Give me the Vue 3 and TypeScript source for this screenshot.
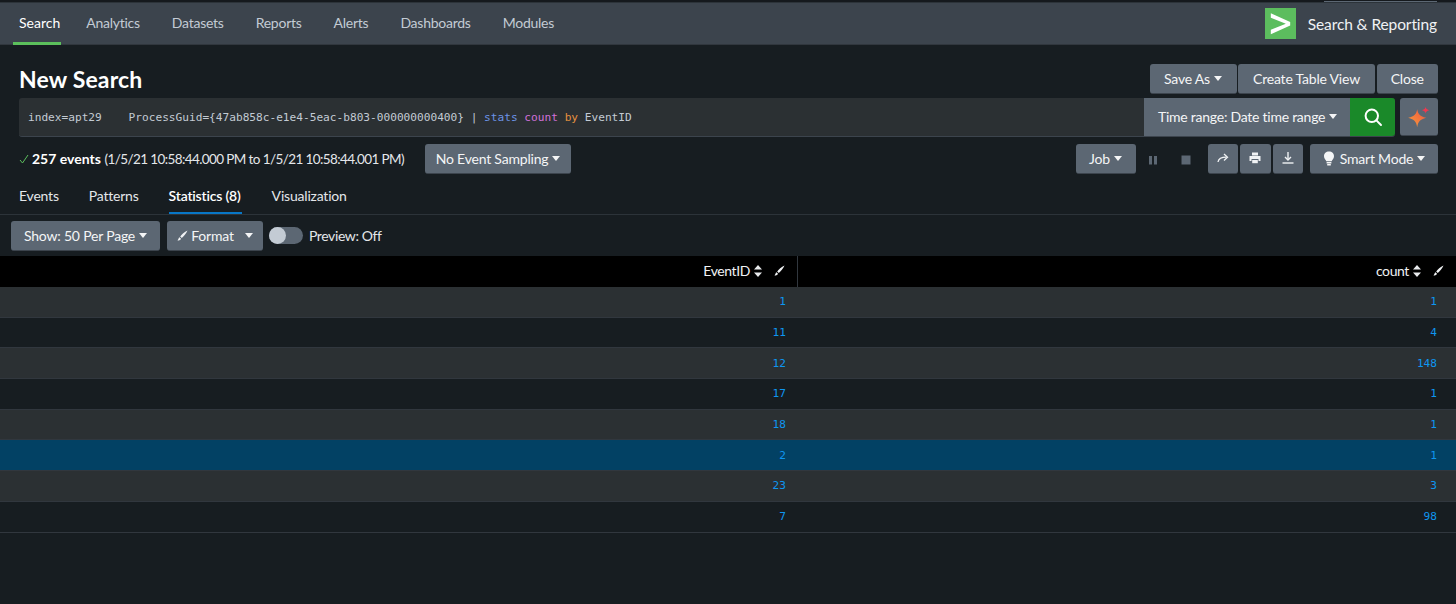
<script setup lang="ts">
const navItems = ['Search', 'Analytics', 'Datasets', 'Reports', 'Alerts', 'Dashboards', 'Modules']
const tabs = ['Events', 'Patterns', 'Statistics (8)', 'Visualization']
const rows = [
  { id: '1', count: '1' },
  { id: '11', count: '4' },
  { id: '12', count: '148' },
  { id: '17', count: '1' },
  { id: '18', count: '1' },
  { id: '2', count: '1', hover: true },
  { id: '23', count: '3' },
  { id: '7', count: '98' }
]
</script>

<template>
  <div class="page">
    <div class="topstrip"><div class="stripbox"></div></div>
    <nav class="nav">
      <a v-for="(item, i) in navItems" :key="item" class="nav-item" :class="{ active: i === 0 }">{{ item }}</a>
      <div class="app-name">
        <svg class="logo" width="31" height="31" viewBox="0 0 32 32">
          <rect width="32" height="32" fill="#5cbd5e" />
          <path d="M6 5.5 L26 14.5 V18 L6 27 V22.5 L21.5 16.2 L6 10 Z" fill="#fff" />
        </svg>
        <span>Search &amp; Reporting</span>
      </div>
    </nav>

    <div class="title-row">
      <h1>New Search</h1>
      <div class="btn-group">
        <button class="btn save">Save As <i class="caret"></i></button>
        <button class="btn create">Create Table View</button>
        <button class="btn close">Close</button>
      </div>
    </div>

    <div class="search-row">
      <div class="search-bar">
        <div class="query">index=apt29&nbsp;&nbsp;&nbsp;&nbsp;ProcessGuid={47ab858c-e1e4-5eac-b803-000000000400} | <span class="q-blue">stats</span> <span class="q-pink">count</span> <span class="q-orange">by</span> EventID</div>
        <div class="time-range">Time range: Date time range <i class="caret"></i></div>
        <button class="go">
          <svg width="20" height="20" viewBox="0 0 20 20" fill="none" stroke="#fff" stroke-width="2">
            <circle cx="8.8" cy="8.8" r="6.2" />
            <path d="M13.4 13.4 L18 18" stroke-linecap="round" />
          </svg>
        </button>
      </div>
      <button class="btn spark">
        <svg width="24" height="24" viewBox="0 0 20 20">
          <defs>
            <linearGradient id="sparkfill" x1="0" y1="1" x2="1" y2="0">
              <stop offset="0" stop-color="#f5a13b" />
              <stop offset="1" stop-color="#f0503f" />
            </linearGradient>
          </defs>
          <path d="M8.5 3.5 C9.3 7.6 10.7 9.2 16 10.7 C10.7 12.2 9.3 13.8 8.5 18.5 C7.7 13.8 6.3 12.2 1 10.7 C6.3 9.2 7.7 7.6 8.5 3.5 Z" fill="url(#sparkfill)" />
          <path d="M15.5 1.5 C15.8 3.2 16.4 3.8 18.5 4.3 C16.4 4.8 15.8 5.4 15.5 7.2 C15.2 5.4 14.6 4.8 12.5 4.3 C14.6 3.8 15.2 3.2 15.5 1.5 Z" fill="#f0384f" />
        </svg>
      </button>
    </div>

    <div class="status-row">
      <svg class="check" width="10" height="10" viewBox="0 0 10 10" fill="none" stroke="#5cbd5e" stroke-width="1">
        <path d="M1 6 L3.5 9 L9 1" />
      </svg>
      <span class="status"><b>257 events</b> <span class="range">(1/5/21 10:58:44.000 PM to 1/5/21 10:58:44.001 PM)</span></span>
      <button class="btn sampling">No Event Sampling <i class="caret"></i></button>
      <div class="job-tools">
        <button class="btn job">Job <i class="caret"></i></button>
        <div class="ctrl">
          <svg width="10" height="10" viewBox="0 0 10 10" fill="#5c6773"><rect x="1" y="1" width="3" height="8.5" /><rect x="6" y="1" width="3" height="8.5" /></svg>
        </div>
        <div class="ctrl">
          <svg width="10" height="10" viewBox="0 0 10 10" fill="#5c6773"><rect x="0.5" y="0.5" width="9" height="9" /></svg>
        </div>
        <button class="btn icon-btn">
          <svg width="12" height="12" viewBox="0 0 12 12" fill="none" stroke="#f0f2f4" stroke-width="1.3">
            <path d="M1 10 C1.5 6.5 4 5.2 9.5 5.2" />
            <path d="M7 2 L10.5 5.2 L7 8.4" />
          </svg>
        </button>
        <button class="btn icon-btn">
          <svg width="12" height="12" viewBox="0 0 12 12" fill="#f0f2f4">
            <rect x="3" y="0.5" width="6" height="3" />
            <path d="M0.5 4 H11.5 V9 H9.5 V7 H2.5 V9 H0.5 Z" />
            <rect x="3.2" y="8" width="5.6" height="3.2" />
          </svg>
        </button>
        <button class="btn icon-btn">
          <svg width="14" height="14" viewBox="0 0 14 14" fill="none" stroke="#f0f2f4" stroke-width="1.4">
            <path d="M7 1 V8.5" />
            <path d="M4 6 L7 9 L10 6" />
            <path d="M1.5 12 H12.5" />
          </svg>
        </button>
        <button class="btn smart">
          <svg width="12" height="15" viewBox="0 0 12 15" fill="#f4f5f6">
            <path d="M6 0.5 C9 0.5 11 2.6 11 5.2 C11 7.4 9.4 8.4 8.7 10.2 H3.3 C2.6 8.4 1 7.4 1 5.2 C1 2.6 3 0.5 6 0.5 Z" />
            <rect x="3.6" y="11" width="4.8" height="1.5" />
            <rect x="4.2" y="13" width="3.6" height="1.5" />
          </svg>
          Smart Mode <i class="caret"></i>
        </button>
      </div>
    </div>

    <div class="tabs">
      <a v-for="(tab, i) in tabs" :key="tab" class="tab" :class="{ active: i === 2 }">{{ tab }}</a>
    </div>

    <div class="toolbar">
      <button class="btn show">Show: 50 Per Page <i class="caret"></i></button>
      <button class="btn format">
        <svg class="brush" width="11" height="11" viewBox="0 0 11 11" fill="#f0f2f4"><path d="M10.5 0.5 C7.5 2 4.5 4.5 3.2 6.5 L4.8 8 C6.8 6.5 9.2 3.5 10.5 0.5 Z M2.5 7.3 C1.5 7.8 1.5 9.5 0.5 10.5 C2.5 10.5 3.8 9.8 4 8.7 Z" /></svg>
        Format <i class="caret wide"></i>
      </button>
      <span class="switch"><span class="knob"></span></span>
      <span class="preview">Preview: Off</span>
    </div>

    <div class="table">
      <div class="thead">
        <div class="th first">
          EventID
          <svg class="sort" width="8" height="12" viewBox="0 0 8 12" fill="#e8eaec"><path d="M4 0 L8 4.6 H0 Z M4 12 L0 7.4 H8 Z" /></svg>
          <svg class="brush-h" width="11" height="11" viewBox="0 0 11 11" fill="#f0f2f4"><path d="M10.5 0.5 C7.5 2 4.5 4.5 3.2 6.5 L4.8 8 C6.8 6.5 9.2 3.5 10.5 0.5 Z M2.5 7.3 C1.5 7.8 1.5 9.5 0.5 10.5 C2.5 10.5 3.8 9.8 4 8.7 Z" /></svg>
        </div>
        <div class="th">
          count
          <svg class="sort" width="8" height="12" viewBox="0 0 8 12" fill="#e8eaec"><path d="M4 0 L8 4.6 H0 Z M4 12 L0 7.4 H8 Z" /></svg>
          <svg class="brush-h" width="11" height="11" viewBox="0 0 11 11" fill="#f0f2f4"><path d="M10.5 0.5 C7.5 2 4.5 4.5 3.2 6.5 L4.8 8 C6.8 6.5 9.2 3.5 10.5 0.5 Z M2.5 7.3 C1.5 7.8 1.5 9.5 0.5 10.5 C2.5 10.5 3.8 9.8 4 8.7 Z" /></svg>
        </div>
      </div>
      <div
        v-for="(row, i) in rows"
        :key="row.id"
        class="tr"
        :class="{ odd: i % 2 === 0, hover: row.hover }"
      >
        <div class="td first">{{ row.id }}</div>
        <div class="td">{{ row.count }}</div>
      </div>
    </div>
  </div>
</template>

<style>
html,
body {
  margin: 0;
  background: #171d21;
}
</style>

<style scoped>
.page {
  width: 1456px;
  height: 604px;
  overflow: hidden;
  background: #171d21;
  color: #fff;
  font-family: Lato, 'Open Sans', sans-serif;
  font-size: 14px;
}
.topstrip {
  height: 2px;
  background: #15191d;
  display: flex;
  justify-content: flex-end;
  padding-right: 19px;
  border-bottom: 1px solid #2c3339;
}
.stripbox {
  width: 113px;
  height: 1px;
  border-bottom: 1px solid #5c6773;
}
.nav {
  height: 42px;
  background: #3c444d;
  display: flex;
  padding-left: 13px;
  gap: 20px;
  box-sizing: border-box;
  border-bottom: 1px solid #31373e;
}
.nav-item {
  padding: 0 6px;
  line-height: 40px;
  font-size: 14px;
  letter-spacing: -0.25px;
  color: #c3cbd4;
}
.nav-item.active {
  color: #fff;
  box-shadow: inset 0 -3px 0 #5cc05c;
  height: 42px;
  padding: 0 1px 0 6px;
  letter-spacing: 0;
  margin-right: -1px;
}
.app-name {
  margin-left: auto;
  display: flex;
  align-items: center;
  gap: 12px;
  padding-right: 19px;
  font-size: 15.5px;
  letter-spacing: -0.1px;
  color: #f0f2f4;
}
.title-row {
  height: 53px;
  display: flex;
  align-items: flex-start;
  justify-content: space-between;
  padding: 19px 18px 0 19px;
  box-sizing: border-box;
}
h1 {
  margin: 0;
  font-size: 23px;
  line-height: 30px;
  font-weight: 700;
  letter-spacing: 0.15px;
  color: #fff;
}
.btn-group {
  display: flex;
  gap: 1.5px;
}
.btn {
  height: 30px;
  padding: 0 13px;
  border: none;
  border-bottom: 1px solid #3c444d;
  border-radius: 3px;
  background: #5c6773;
  color: #f4f5f6;
  font-family: inherit;
  font-size: 14px;
  letter-spacing: -0.2px;
  display: inline-flex;
  align-items: center;
  justify-content: center;
  white-space: nowrap;
  box-sizing: border-box;
}
.save {
  width: 87px;
}
.create {
  width: 137px;
}
.close {
  width: 61.5px;
}
.caret {
  display: inline-block;
  margin-left: 4px;
  border-left: 4px solid transparent;
  border-right: 4px solid transparent;
  border-top: 5px solid #f4f5f6;
}
.caret.wide {
  margin-left: 8px;
}
.search-row {
  display: flex;
  padding: 0 18px 0 19px;
  gap: 5px;
  height: 39px;
}
.search-bar {
  flex: 1;
  display: flex;
  background: #2b3033;
  border-bottom: 1px solid #3c444d;
  border-radius: 3px;
  box-sizing: border-box;
}
.query {
  flex: 1;
  padding-left: 9px;
  line-height: 40px;
  font-family: 'DejaVu Sans Mono', monospace;
  font-size: 11.15px;
  color: #c3cbd4;
  white-space: pre;
}
.q-blue {
  color: #6b93e6;
}
.q-pink {
  color: #d070d8;
}
.q-orange {
  color: #e6913f;
}
.time-range {
  width: 206px;
  background: #5c6773;
  font-size: 14px;
  letter-spacing: -0.25px;
  color: #f4f5f6;
  display: flex;
  align-items: center;
  padding: 0 0 2px 14px;
  box-sizing: border-box;
}
.go {
  width: 45px;
  border: none;
  padding: 0;
  background: #1a8929;
  border-radius: 0 3px 3px 0;
  display: flex;
  align-items: center;
  justify-content: center;
}
.spark {
  width: 38px;
  height: 38px;
  padding: 0;
}
.status-row {
  height: 36px;
  margin-top: 1px;
  display: flex;
  align-items: center;
  padding: 5px 18px 0 19px;
  box-sizing: border-box;
  font-size: 14px;
}
.check {
  flex: none;
  margin-right: 3px;
}
.status {
  color: #e4e7ea;
  white-space: nowrap;
}
.status b {
  color: #fff;
}
.range {
  font-size: 13.5px;
  letter-spacing: -0.6px;
}
.sampling {
  margin-left: 21px;
  width: 146px;
  padding: 0;
}
.job-tools {
  margin-left: auto;
  display: flex;
  align-items: center;
  gap: 2px;
}
.job {
  width: 60px;
  padding: 0;
}
.ctrl {
  width: 31px;
  display: flex;
  justify-content: center;
  padding-top: 2px;
}
.ctrl:nth-child(3) {
  margin-right: 4px;
}
.icon-btn {
  width: 30.5px;
  padding: 0;
}
.smart {
  width: 128px;
  padding: 0;
  margin-left: 5px;
  gap: 5px;
}
.smart .caret {
  margin-left: -1px;
}
.tabs {
  height: 41px;
  display: flex;
  gap: 30px;
  padding-left: 19px;
  border-bottom: 1px solid #2c3339;
  box-sizing: border-box;
}
.tab {
  line-height: 44px;
  font-size: 14px;
  letter-spacing: -0.2px;
  color: #e4e7ea;
  height: 40px;
}
.tab.active {
  color: #fff;
  font-weight: 600;
  box-shadow: inset 0 -2px 0 #0877c7;
  width: 73px;
  white-space: nowrap;
}
.toolbar {
  height: 41px;
  display: flex;
  align-items: center;
  padding-left: 11px;
  box-sizing: border-box;
}
.show {
  width: 149px;
  padding: 0;
}
.format {
  width: 96px;
  padding: 0;
  margin-left: 7px;
  gap: 3px;
}
.brush {
  margin-top: 1px;
}
.switch {
  width: 34px;
  height: 17px;
  margin-left: 6px;
  border-radius: 9px;
  background: #5c6773;
  position: relative;
}
.knob {
  position: absolute;
  left: 0;
  top: 0;
  width: 17px;
  height: 17px;
  border-radius: 50%;
  background: #c3cbd4;
}
.preview {
  margin-left: 6px;
  font-size: 14px;
  letter-spacing: -0.4px;
  color: #e4e7ea;
}
.thead {
  height: 31px;
  background: #000;
  display: grid;
  grid-template-columns: 798px 1fr;
  box-sizing: border-box;
}
.th {
  display: flex;
  align-items: center;
  justify-content: flex-end;
  padding: 0 12px 2px 0;
  font-size: 14px;
  letter-spacing: -0.4px;
  color: #f0f2f4;
  box-sizing: border-box;
}
.th.first {
  border-right: 1px solid #31373e;
}
.sort {
  margin-left: 4px;
}
.brush-h {
  margin-left: 12px;
}
.tr {
  height: 30.7px;
  display: grid;
  grid-template-columns: 798px 1fr;
  background: #171d21;
  border-bottom: 1px solid #31373e;
  box-sizing: border-box;
}
.tr.odd {
  background: #2b3033;
}
.tr.hover {
  background: #024164;
}
.td {
  display: flex;
  align-items: center;
  justify-content: flex-end;
  padding-right: 19px;
  font-family: 'DejaVu Sans Mono', monospace;
  font-size: 11.15px;
  color: #0e96f0;
}
.td.first {
  padding-right: 12px;
}
</style>
